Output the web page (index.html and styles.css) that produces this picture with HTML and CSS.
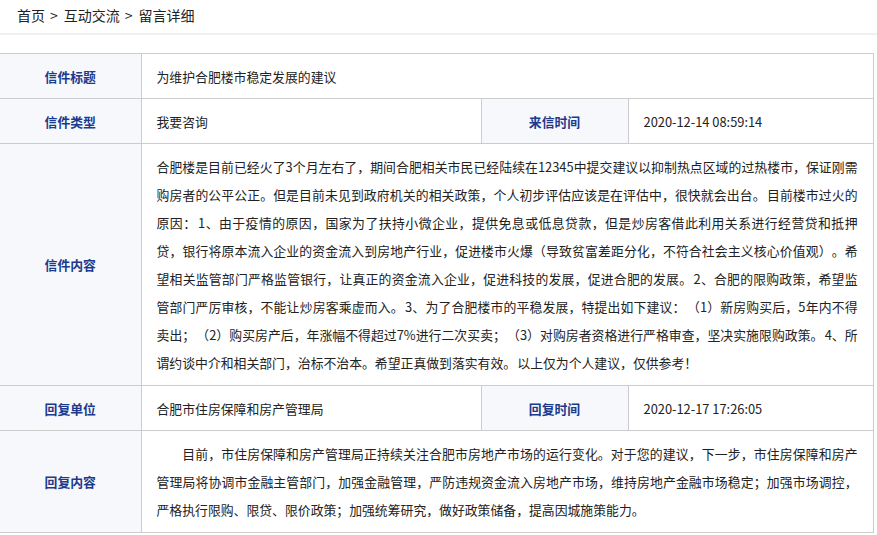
FILE: index.html
```html
<!DOCTYPE html>
<html lang="zh-CN">
<head>
<meta charset="utf-8">
<title>留言详细</title>
<link rel="stylesheet" href="styles.css">
</head>
<body>
<div class="crumb"><span>首页</span><span class="sep">&gt;</span><span>互动交流</span><span class="sep">&gt;</span><span>留言详细</span></div>
<table class="detail">
  <colgroup>
    <col class="c1"><col class="c2"><col class="c3"><col class="c4">
  </colgroup>
  <tr class="row">
    <th>信件标题</th>
    <td colspan="3">为维护合肥楼市稳定发展的建议</td>
  </tr>
  <tr class="row">
    <th>信件类型</th>
    <td>我要咨询</td>
    <th>来信时间</th>
    <td>2020-12-14 08:59:14</td>
  </tr>
  <tr>
    <th>信件内容</th>
    <td colspan="3" class="para">合肥楼是目前已经火了3个月左右了，期间合肥相关市民已经陆续在12345中提交建议以抑制热点区域的过热楼市，保证刚需购房者的公平公正。但是目前未见到政府机关的相关政策，个人初步评估应该是在评估中，很快就会出台。 目前楼市过火的原因： 1、由于疫情的原因，国家为了扶持小微企业，提供免息或低息贷款，但是炒房客借此利用关系进行经营贷和抵押贷，银行将原本流入企业的资金流入到房地产行业，促进楼市火爆（导致贫富差距分化，不符合社会主义核心价值观）。希望相关监管部门严格监管银行，让真正的资金流入企业，促进科技的发展，促进合肥的发展。 2、合肥的限购政策，希望监管部门严厉审核，不能让炒房客乘虚而入。 3、为了合肥楼市的平稳发展，特提出如下建议： （1）新房购买后，5年内不得卖出； （2）购买房产后，年涨幅不得超过7%进行二次买卖； （3）对购房者资格进行严格审查，坚决实施限购政策。 4、所谓约谈中介和相关部门，治标不治本。希望正真做到落实有效。 以上仅为个人建议，仅供参考！</td>
  </tr>
  <tr class="row">
    <th>回复单位</th>
    <td>合肥市住房保障和房产管理局</td>
    <th>回复时间</th>
    <td>2020-12-17 17:26:05</td>
  </tr>
  <tr>
    <th>回复内容</th>
    <td colspan="3" class="para indent">目前，市住房保障和房产管理局正持续关注合肥市房地产市场的运行变化。对于您的建议，下一步，市住房保障和房产管理局将协调市金融主管部门，加强金融管理，严防违规资金流入房地产市场，维持房地产金融市场稳定；加强市场调控，严格执行限购、限贷、限价政策；加强统筹研究，做好政策储备，提高因城施策能力。</td>
  </tr>
</table>
</body>
</html>
```

FILE: styles.css
```css
html, body {
  margin: 0;
  padding: 0;
  background: #ffffff;
}
body {
  font-family: "Microsoft YaHei", "Noto Sans CJK SC", "Noto Sans", sans-serif;
  color: #222;
  text-spacing-trim: space-all;
}
.crumb {
  height: 33px;
  line-height: 31px;
  padding: 0 17px;
  font-size: 14px;
  color: #222;
  border-bottom: 2px solid #f0f0f0;
  margin-bottom: 18px;
}
.crumb .sep {
  padding: 0 6px 0 5px;
}
.detail {
  width: 873px;
  table-layout: fixed;
  border-collapse: collapse;
  font-size: 12.85px;
}
.c1 { width: 141px; }
.c2 { width: 340px; }
.c3 { width: 147px; }
.c4 { width: 245px; }
.detail th, .detail td {
  border: 1px solid #cccccc;
  padding: 0 15px;
}
.detail tr > :first-child {
  border-left: none;
}
.detail th {
  background: #f7f8fc;
  color: #1c3a8c;
  font-weight: bold;
  text-align: center;
  vertical-align: middle;
}
.detail td {
  text-align: left;
  color: #222;
}
.row {
  height: 45px;
}
.detail .para {
  line-height: 28px;
  padding: 9px 15px 8px 15px;
  text-align: justify;
  word-spacing: -1.7px;
}
.detail .indent {
  text-indent: 2em;
}
```
